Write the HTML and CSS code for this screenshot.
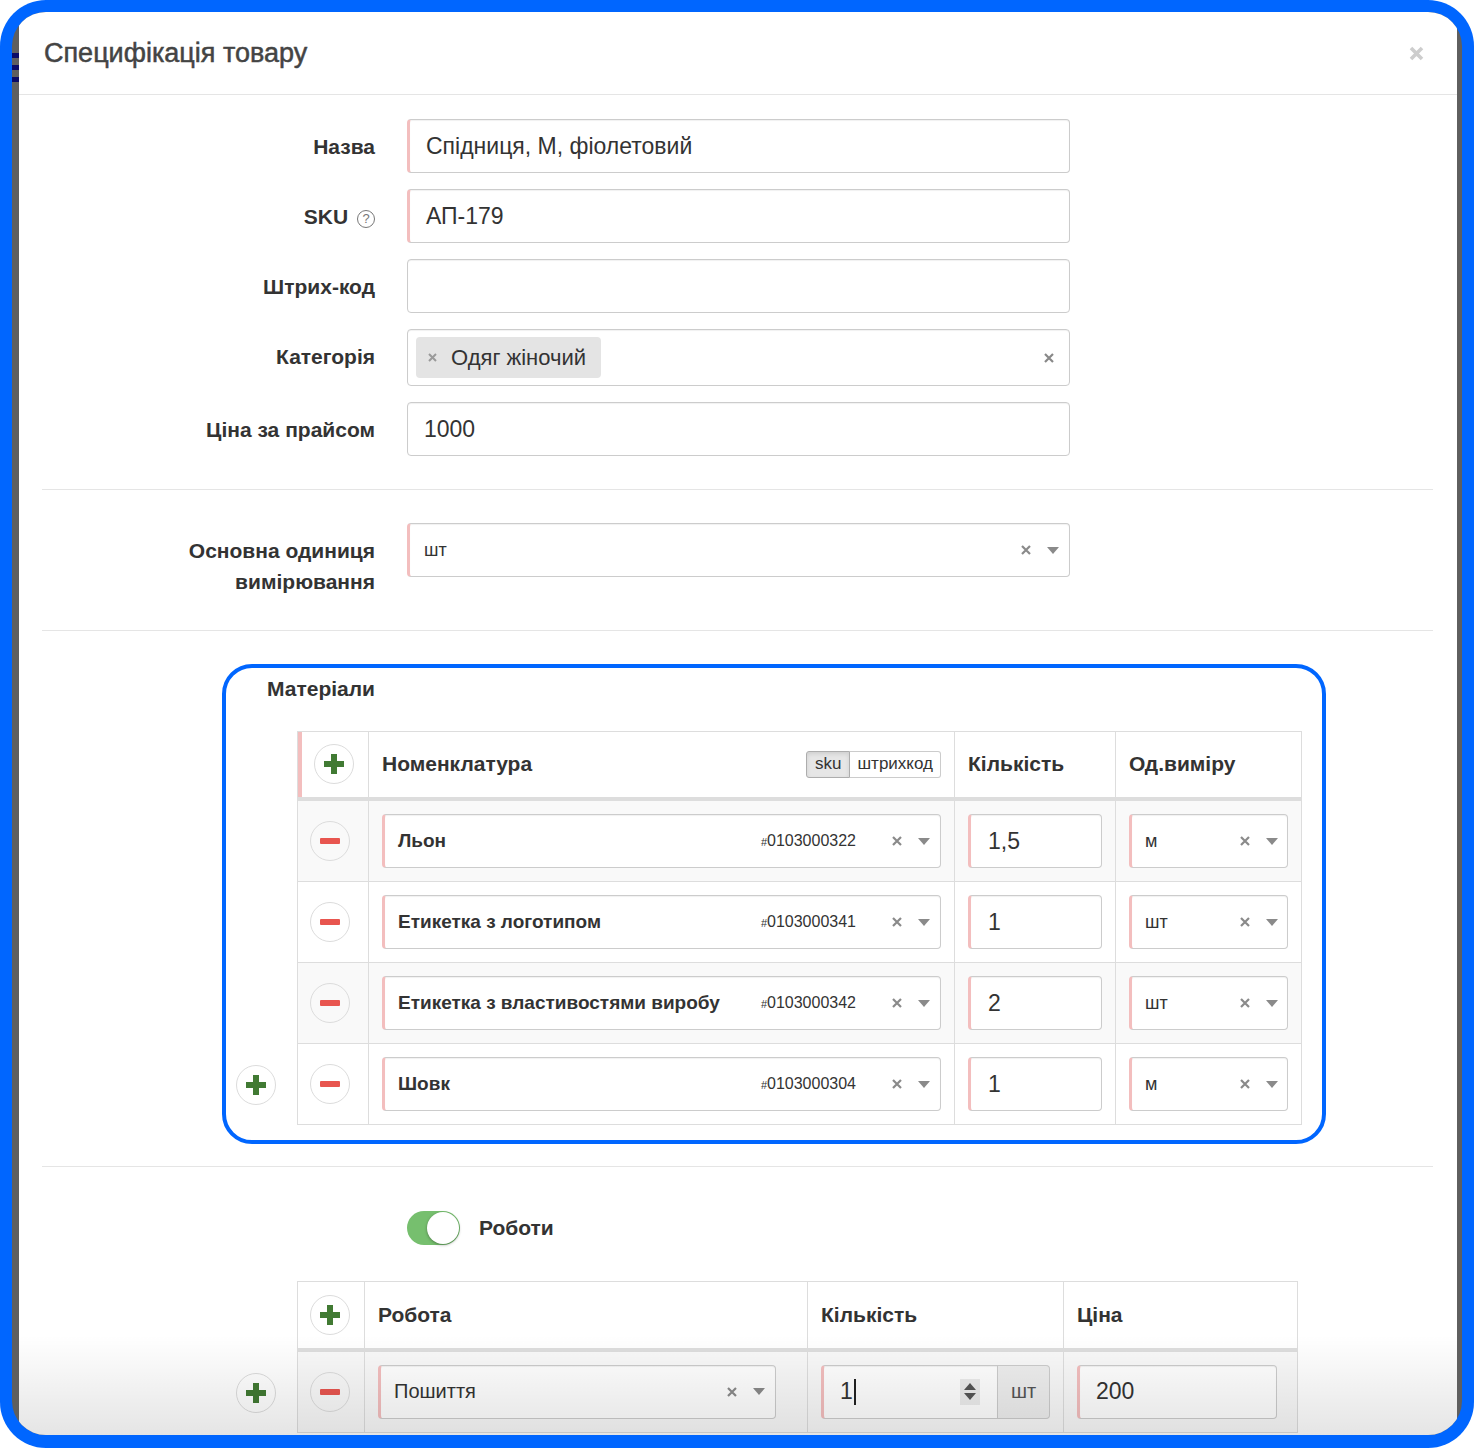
FILE: index.html
```html
<!DOCTYPE html>
<html lang="uk">
<head>
  <meta charset="UTF-8">
  <title>Специфікація товару</title>
  <link rel="stylesheet" href="styles.css">
</head>
<body>
  <div class="frame">
    <div class="screen">
      <div class="backdrop-left"><span></span><span></span><span></span></div>

      <div class="modal">
        <div class="modal-header">
          <h4 class="modal-title">Специфікація товару</h4>
          <svg class="close" width="15" height="15" viewBox="0 0 15 15"><path d="M2 2L13 13M13 2L2 13" stroke="#cdcdcd" stroke-width="3.6"/></svg>
        </div>

        <div class="modal-body">
          <div class="form-row">
            <label class="form-label">Назва</label>
            <div class="input req">Спідниця, М, фіолетовий</div>
          </div>
          <div class="form-row">
            <label class="form-label">SKU <span class="help">?</span></label>
            <div class="input req">АП-179</div>
          </div>
          <div class="form-row">
            <label class="form-label">Штрих-код</label>
            <div class="input"></div>
          </div>
          <div class="form-row">
            <label class="form-label">Категорія</label>
            <div class="input tags">
              <span class="chip">
                <svg width="9" height="9" viewBox="0 0 9 9"><path d="M1 1L8 8M8 1L1 8" stroke="#9a9a9a" stroke-width="2"/></svg>
                Одяг жіночий
              </span>
              <svg class="clear-all" width="10" height="10" viewBox="0 0 10 10"><path d="M1 1L9 9M9 1L1 9" stroke="#888" stroke-width="2.2"/></svg>
            </div>
          </div>
          <div class="form-row">
            <label class="form-label">Ціна за прайсом</label>
            <div class="input">1000</div>
          </div>

          <hr>

          <div class="form-row">
            <label class="form-label">Основна одиниця<br>вимірювання</label>
            <div class="input req select small">
              <span class="sel-text">шт</span>
              <svg class="x" width="10" height="10" viewBox="0 0 10 10"><path d="M1 1L9 9M9 1L1 9" stroke="#8a8a8a" stroke-width="2.2"/></svg>
              <svg class="tri" width="12" height="7" viewBox="0 0 12 7"><path d="M0 0H12L6 7Z" fill="#8a8a8a"/></svg>
            </div>
          </div>

          <hr>

          <div class="materials">
            <div class="section-title">Матеріали</div>
            <div class="table-wrap">
              <div class="gutter">
                <span class="circle-btn"><svg width="20" height="20" viewBox="0 0 20 20"><path d="M7 0H13V7H20V13H13V20H7V13H0V7H7Z" fill="#417a33"/></svg></span>
              </div>
              <table class="grid mat">
                <colgroup><col style="width:71px"><col style="width:586px"><col style="width:161px"><col style="width:186px"></colgroup>
                <thead>
                  <tr>
                    <th class="pink"><span class="circle-btn"><svg width="20" height="20" viewBox="0 0 20 20"><path d="M7 0H13V7H20V13H13V20H7V13H0V7H7Z" fill="#417a33"/></svg></span></th>
                    <th>
                      <div class="th-flex">
                        <span>Номенклатура</span>
                        <span class="btn-group"><span class="active">sku</span><span>штрихкод</span></span>
                      </div>
                    </th>
                    <th>Кількість</th>
                    <th>Од.виміру</th>
                  </tr>
                </thead>
                <tbody>
                  <tr>
                    <td><span class="circle-btn"><svg width="20" height="6" viewBox="0 0 20 6"><rect width="20" height="6" rx="1" fill="#e8554f"/></svg></span></td>
                    <td>
                      <div class="input req select cell-sel">
                        <span class="sel-text bold">Льон</span>
                        <span class="code"><small>#</small>0103000322</span>
                        <svg class="x" width="10" height="10" viewBox="0 0 10 10"><path d="M1 1L9 9M9 1L1 9" stroke="#8a8a8a" stroke-width="2.2"/></svg>
                        <svg class="tri" width="12" height="7" viewBox="0 0 12 7"><path d="M0 0H12L6 7Z" fill="#8a8a8a"/></svg>
                      </div>
                    </td>
                    <td><div class="input req cell-input">1,5</div></td>
                    <td>
                      <div class="input req select unit-sel">
                        <span class="sel-text">м</span>
                        <svg class="x" width="10" height="10" viewBox="0 0 10 10"><path d="M1 1L9 9M9 1L1 9" stroke="#8a8a8a" stroke-width="2.2"/></svg>
                        <svg class="tri" width="12" height="7" viewBox="0 0 12 7"><path d="M0 0H12L6 7Z" fill="#8a8a8a"/></svg>
                      </div>
                    </td>
                  </tr>
                  <tr>
                    <td><span class="circle-btn"><svg width="20" height="6" viewBox="0 0 20 6"><rect width="20" height="6" rx="1" fill="#e8554f"/></svg></span></td>
                    <td>
                      <div class="input req select cell-sel">
                        <span class="sel-text bold">Етикетка з логотипом</span>
                        <span class="code"><small>#</small>0103000341</span>
                        <svg class="x" width="10" height="10" viewBox="0 0 10 10"><path d="M1 1L9 9M9 1L1 9" stroke="#8a8a8a" stroke-width="2.2"/></svg>
                        <svg class="tri" width="12" height="7" viewBox="0 0 12 7"><path d="M0 0H12L6 7Z" fill="#8a8a8a"/></svg>
                      </div>
                    </td>
                    <td><div class="input req cell-input">1</div></td>
                    <td>
                      <div class="input req select unit-sel">
                        <span class="sel-text">шт</span>
                        <svg class="x" width="10" height="10" viewBox="0 0 10 10"><path d="M1 1L9 9M9 1L1 9" stroke="#8a8a8a" stroke-width="2.2"/></svg>
                        <svg class="tri" width="12" height="7" viewBox="0 0 12 7"><path d="M0 0H12L6 7Z" fill="#8a8a8a"/></svg>
                      </div>
                    </td>
                  </tr>
                  <tr>
                    <td><span class="circle-btn"><svg width="20" height="6" viewBox="0 0 20 6"><rect width="20" height="6" rx="1" fill="#e8554f"/></svg></span></td>
                    <td>
                      <div class="input req select cell-sel">
                        <span class="sel-text bold">Етикетка з властивостями виробу</span>
                        <span class="code"><small>#</small>0103000342</span>
                        <svg class="x" width="10" height="10" viewBox="0 0 10 10"><path d="M1 1L9 9M9 1L1 9" stroke="#8a8a8a" stroke-width="2.2"/></svg>
                        <svg class="tri" width="12" height="7" viewBox="0 0 12 7"><path d="M0 0H12L6 7Z" fill="#8a8a8a"/></svg>
                      </div>
                    </td>
                    <td><div class="input req cell-input">2</div></td>
                    <td>
                      <div class="input req select unit-sel">
                        <span class="sel-text">шт</span>
                        <svg class="x" width="10" height="10" viewBox="0 0 10 10"><path d="M1 1L9 9M9 1L1 9" stroke="#8a8a8a" stroke-width="2.2"/></svg>
                        <svg class="tri" width="12" height="7" viewBox="0 0 12 7"><path d="M0 0H12L6 7Z" fill="#8a8a8a"/></svg>
                      </div>
                    </td>
                  </tr>
                  <tr>
                    <td><span class="circle-btn"><svg width="20" height="6" viewBox="0 0 20 6"><rect width="20" height="6" rx="1" fill="#e8554f"/></svg></span></td>
                    <td>
                      <div class="input req select cell-sel">
                        <span class="sel-text bold">Шовк</span>
                        <span class="code"><small>#</small>0103000304</span>
                        <svg class="x" width="10" height="10" viewBox="0 0 10 10"><path d="M1 1L9 9M9 1L1 9" stroke="#8a8a8a" stroke-width="2.2"/></svg>
                        <svg class="tri" width="12" height="7" viewBox="0 0 12 7"><path d="M0 0H12L6 7Z" fill="#8a8a8a"/></svg>
                      </div>
                    </td>
                    <td><div class="input req cell-input">1</div></td>
                    <td>
                      <div class="input req select unit-sel">
                        <span class="sel-text">м</span>
                        <svg class="x" width="10" height="10" viewBox="0 0 10 10"><path d="M1 1L9 9M9 1L1 9" stroke="#8a8a8a" stroke-width="2.2"/></svg>
                        <svg class="tri" width="12" height="7" viewBox="0 0 12 7"><path d="M0 0H12L6 7Z" fill="#8a8a8a"/></svg>
                      </div>
                    </td>
                  </tr>
                </tbody>
              </table>
            </div>
          </div>

          <hr class="after-box">

          <div class="form-row toggle-row">
            <span></span>
            <div class="toggle-wrap">
              <span class="toggle"><span class="knob"></span></span>
              <span class="toggle-label">Роботи</span>
            </div>
          </div>

          <div class="table-wrap works-wrap">
            <div class="gutter">
              <span class="circle-btn"><svg width="20" height="20" viewBox="0 0 20 20"><path d="M7 0H13V7H20V13H13V20H7V13H0V7H7Z" fill="#417a33"/></svg></span>
            </div>
            <table class="grid works">
              <colgroup><col style="width:67px"><col style="width:443px"><col style="width:256px"><col style="width:234px"></colgroup>
              <thead>
                <tr>
                  <th><span class="circle-btn"><svg width="20" height="20" viewBox="0 0 20 20"><path d="M7 0H13V7H20V13H13V20H7V13H0V7H7Z" fill="#417a33"/></svg></span></th>
                  <th>Робота</th>
                  <th>Кількість</th>
                  <th>Ціна</th>
                </tr>
              </thead>
              <tbody>
                <tr>
                  <td><span class="circle-btn"><svg width="20" height="6" viewBox="0 0 20 6"><rect width="20" height="6" rx="1" fill="#e8554f"/></svg></span></td>
                  <td>
                    <div class="input req select work-sel">
                      <span class="sel-text">Пошиття</span>
                      <svg class="x" width="10" height="10" viewBox="0 0 10 10"><path d="M1 1L9 9M9 1L1 9" stroke="#8a8a8a" stroke-width="2.2"/></svg>
                      <svg class="tri" width="12" height="7" viewBox="0 0 12 7"><path d="M0 0H12L6 7Z" fill="#8a8a8a"/></svg>
                    </div>
                  </td>
                  <td>
                    <div class="input-group">
                      <div class="input req qty">
                        <span class="typed">1</span><span class="cursor"></span>
                        <span class="spin">
                          <svg width="12" height="7" viewBox="0 0 12 7"><path d="M0 7H12L6 0Z" fill="#555"/></svg>
                          <svg width="12" height="7" viewBox="0 0 12 7"><path d="M0 0H12L6 7Z" fill="#555"/></svg>
                        </span>
                      </div>
                      <span class="addon">шт</span>
                    </div>
                  </td>
                  <td><div class="input req price">200</div></td>
                </tr>
              </tbody>
            </table>
          </div>
        </div>

        <div class="fade"></div>
      </div>

      <div class="backdrop-right"></div>
    </div>
  </div>
</body>
</html>
```

FILE: styles.css
```css
* {
  box-sizing: border-box;
}
html, body {
  margin: 0;
}
body {
  background: #fff;
  font-family: "Liberation Sans", Arial, sans-serif;
  color: #333;
}
.frame {
  height: 1448px;
  padding: 12px 12px 13px;
  background: #0066ff;
  border-radius: 46px;
}
.screen {
  display: flex;
  height: 100%;
  background: #5f5f5f;
  border-radius: 34px;
  overflow: hidden;
}
.backdrop-left {
  width: 7px;
  padding-top: 41px;
}
.backdrop-left span {
  display: block;
  height: 5px;
  margin-bottom: 7px;
  background: #0b0b66;
}
.backdrop-right {
  width: 5px;
}
.modal {
  flex: 1;
  position: relative;
  background: #fff;
  overflow: hidden;
}

/* header */
.modal-header {
  height: 83px;
  padding: 0 33px 0 25px;
  display: flex;
  align-items: center;
  justify-content: space-between;
  border-bottom: 1px solid #e5e5e5;
}
.modal-title {
  margin: 0;
  font-size: 27px;
  font-weight: normal;
  color: #444;
  -webkit-text-stroke: 0.5px #444;
}

.modal-body {
  padding: 24px 24px 0 23px;
}
hr {
  border: 0;
  border-top: 1px solid #e5e5e5;
  margin: 33px 0;
}
hr.after-box {
  margin: 22px 0 44px;
}

/* form rows */
.form-row {
  display: grid;
  grid-template-columns: 333px 663px;
  column-gap: 32px;
  margin-bottom: 16px;
}
.form-label {
  text-align: right;
  font-weight: bold;
  font-size: 21px;
  line-height: 31px;
  padding-top: 11.5px;
}
.help {
  display: inline-block;
  width: 18px;
  height: 18px;
  margin-left: 3px;
  border: 1.4px solid #777;
  border-radius: 50%;
  font-size: 13px;
  line-height: 16px;
  text-align: center;
  font-weight: normal;
  color: #777;
  vertical-align: 1px;
}
.input {
  height: 54px;
  display: flex;
  align-items: center;
  padding: 0 16px;
  border: 1px solid #ccc;
  border-radius: 4px;
  background: #fff;
  box-shadow: inset 0 1px 1px rgba(0, 0, 0, 0.06);
  font-size: 23px;
  color: #333;
}
.req {
  border-left: 3px solid #f3bebe;
}
.tags {
  height: 57px;
  padding: 0 15px 0 8px;
}
.chip {
  display: flex;
  align-items: center;
  gap: 14px;
  height: 41px;
  padding: 0 15px 0 12px;
  background: #e4e4e4;
  border-radius: 4px;
  font-size: 22px;
}
.clear-all {
  margin-left: auto;
}

/* select-like boxes */
.select {
  padding-right: 10px;
}
.select .sel-text {
  flex: 1;
  white-space: nowrap;
}
.select .x {
  margin-left: 16px;
}
.select .tri {
  margin-left: 16px;
}
.small {
  font-size: 18px;
  padding-left: 14px;
}
.bold {
  font-weight: bold;
}
.code {
  font-size: 16px;
  margin-right: 20px;
}
.code small {
  font-size: 11px;
}

/* materials box */
.materials {
  margin: 33px 107px 0 180px;
  border: 4px solid #0066ff;
  border-radius: 30px;
  padding: 0 21px 15px 0;
}
.section-title {
  width: 149px;
  text-align: right;
  font-weight: bold;
  font-size: 21px;
  line-height: 28px;
  padding-top: 7px;
  margin-bottom: 28px;
}
.table-wrap {
  display: flex;
  align-items: flex-end;
}
.gutter {
  width: 71px;
  flex: none;
  padding: 0 0 20px 10px;
}
.works-wrap {
  margin-left: 184px;
}
.circle-btn {
  display: flex;
  align-items: center;
  justify-content: center;
  width: 40px;
  height: 40px;
  border: 1px solid #dcdcdc;
  border-radius: 50%;
}

/* tables */
.grid {
  border-collapse: collapse;
  table-layout: fixed;
}
.grid.mat {
  width: 1004px;
}
.grid.works {
  width: 1000px;
}
.grid th, .grid td {
  border: 1px solid #ddd;
  padding: 13px 13px;
  vertical-align: middle;
  text-align: left;
}
.grid th {
  height: 68px;
  font-size: 21px;
  font-weight: bold;
  border-bottom: 4px solid #ddd;
  padding-top: 12px;
  padding-bottom: 12px;
}
.grid th:first-child, .grid td:first-child {
  padding-left: 12px;
}
.grid th.pink {
  padding-left: 16px;
  box-shadow: inset 4px 0 0 #f3bebe;
}
.grid tbody tr:nth-child(odd) td {
  background: #f9f9f9;
}
.th-flex {
  display: flex;
  align-items: center;
  justify-content: space-between;
}
.btn-group {
  display: flex;
  font-size: 17px;
  font-weight: normal;
  height: 27px;
}
.btn-group span {
  display: flex;
  align-items: center;
  padding: 0 7px;
  border: 1px solid #ccc;
  background: #fff;
}
.btn-group span:first-child {
  padding: 0 8px;
  background: #e6e6e6;
  border-color: #adadad;
  border-radius: 3px 0 0 3px;
  box-shadow: inset 0 2px 4px rgba(0, 0, 0, 0.1);
}
.btn-group span:last-child {
  border-left: 0;
  border-radius: 0 3px 3px 0;
}
.cell-sel {
  font-size: 19px;
  padding-left: 13px;
}
.cell-input {
  padding-left: 17px;
}
.unit-sel {
  font-size: 18px;
  padding-left: 13px;
  padding-right: 9px;
}

/* toggle */
.toggle-row {
  margin-bottom: 36px;
}
.toggle-wrap {
  display: flex;
  align-items: center;
  gap: 19px;
}
.toggle {
  display: flex;
  justify-content: flex-end;
  width: 53px;
  height: 34px;
  padding: 1px;
  border-radius: 17px;
  background: #76bf6e;
}
.knob {
  width: 32px;
  height: 32px;
  border-radius: 50%;
  background: #fff;
  box-shadow: 0 1px 3px rgba(0, 0, 0, 0.35);
}
.toggle-label {
  font-size: 21px;
  font-weight: bold;
}

/* works row */
.work-sel {
  width: 398px;
  font-size: 20px;
  padding-left: 13px;
}
.input-group {
  display: flex;
  width: 229px;
}
.qty {
  width: 177px;
  border-radius: 4px 0 0 4px;
  padding-left: 16px;
  padding-right: 17px;
}
.cursor {
  width: 2px;
  height: 26px;
  margin-left: 1px;
  background: #222;
}
.spin {
  margin-left: auto;
  display: flex;
  flex-direction: column;
  align-items: center;
  justify-content: center;
  gap: 3px;
  width: 20px;
  height: 26px;
  background: #ececec;
}
.addon {
  display: flex;
  align-items: center;
  justify-content: center;
  width: 52px;
  height: 54px;
  border: 1px solid #ccc;
  border-left: 0;
  border-radius: 0 4px 4px 0;
  background: #eee;
  font-size: 20px;
  color: #555;
}
.price {
  width: 200px;
  padding-left: 16px;
}

.fade {
  position: absolute;
  left: 0;
  right: 0;
  bottom: 0;
  height: 100px;
  background: linear-gradient(rgba(0, 0, 0, 0), rgba(0, 0, 0, 0.1));
}
```
